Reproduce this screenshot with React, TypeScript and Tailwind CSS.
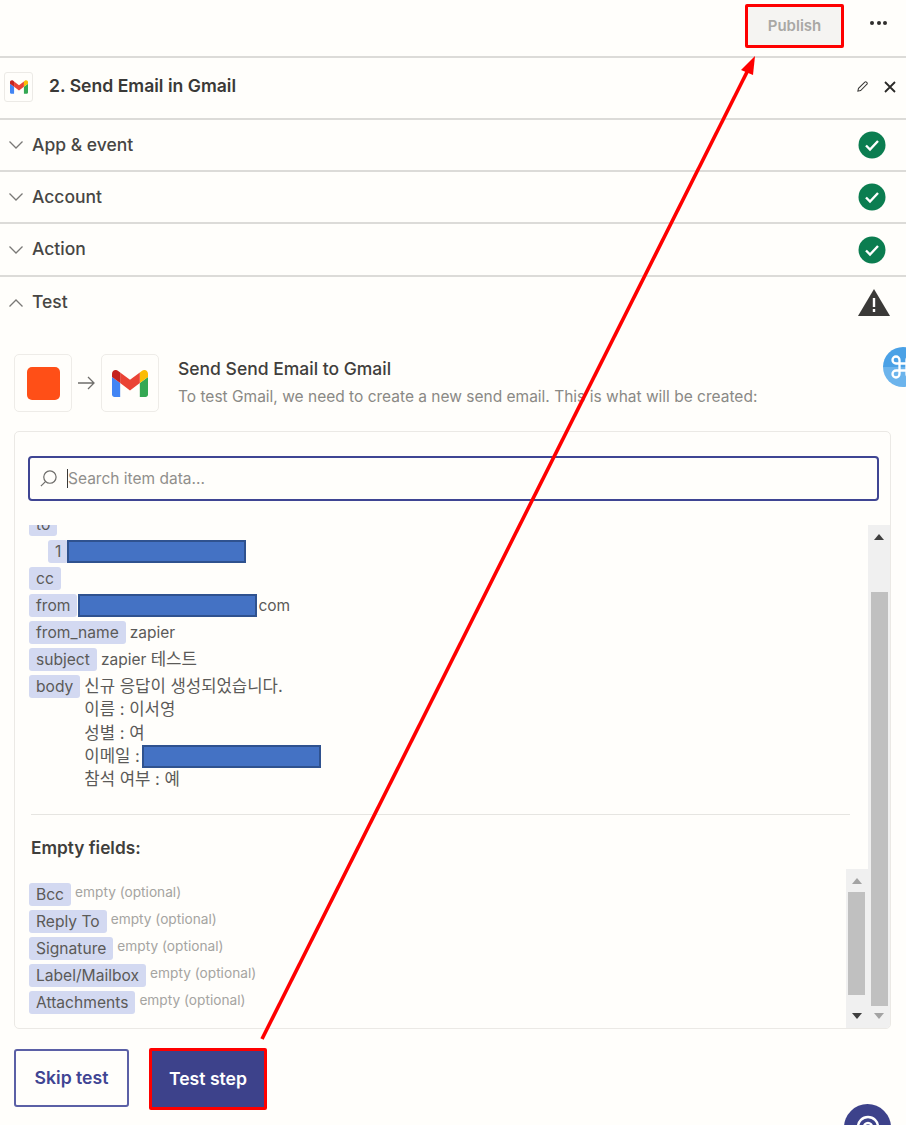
import React from "react";

function GmailM({ className }: { className: string }) {
  return (
    <svg viewBox="52 42 88 66" className={className}>
      <path fill="#4285f4" d="M58 108h14V74L52 59v43c0 3.32 2.69 6 6 6" />
      <path fill="#34a853" d="M120 108h14c3.32 0 6-2.69 6-6V59l-20 15" />
      <path fill="#fbbc04" d="M120 48v26l20-15v-8c0-7.42-8.47-11.65-14.4-7.2" />
      <path fill="#ea4335" d="M72 74V48l24 18 24-18v26L96 92" />
      <path fill="#c5221f" d="M52 51v8l20 15V48l-5.6-4.2c-5.94-4.45-14.4-.22-14.4 7.2" />
    </svg>
  );
}

function Check() {
  return (
    <svg viewBox="0 0 28 28" className="w-[28px] h-[28px]">
      <circle cx="14" cy="14" r="13.5" fill="#0b7d50" />
      <path d="M8 14.5l4 4 8-8.5" fill="none" stroke="#fff" strokeWidth="2.4" />
    </svg>
  );
}

function Chevron({ up }: { up?: boolean }) {
  return (
    <svg viewBox="0 0 16 10" className="w-[16px] h-[10px]">
      <path d={up ? "M1.5 8.5L8 2l6.5 6.5" : "M1.5 1.5L8 8l6.5-6.5"} fill="none" stroke="#7a7976" strokeWidth="1.3" />
    </svg>
  );
}

function Section({ title, h, icon }: { title: string; h: string; icon: React.ReactNode }) {
  return (
    <div className={`flex items-center pl-[8px] pr-[20px] border-b-2 border-[#dcdbd8] ${h}`}>
      <Chevron />
      <span className="ml-[8px] text-[17.5px] font-medium text-[#474644] flex-1">{title}</span>
      {icon}
    </div>
  );
}

function Tag({ children }: { children: React.ReactNode }) {
  return (
    <span className="inline-block h-[23px] leading-[23px] px-[7px] rounded-[3px] bg-[#d3d9f1] text-[15.6px] text-[#5b5a58] shrink-0">
      {children}
    </span>
  );
}

function Redact({ className }: { className: string }) {
  return <span className={`block h-[23px] bg-[#4472c4] border-2 border-[#2f528f] shrink-0 ${className}`} />;
}

function Tri({ dir, color }: { dir: "up" | "down"; color: string }) {
  return (
    <svg viewBox="0 0 10 6" className="w-[10px] h-[6px]">
      <path d={dir === "up" ? "M0 6L5 0l5 6z" : "M0 0l5 6 5-6z"} fill={color} />
    </svg>
  );
}

const empties = ["Bcc", "Reply To", "Signature", "Label/Mailbox", "Attachments"];

export default function App() {
  return (
    <div className="relative w-[906px] h-[1125px] overflow-hidden bg-[#fffefb] font-['Inter','Noto_Sans_CJK_KR',sans-serif]">
      {/* top bar */}
      <div className="h-[58px] border-b-2 border-[#dcdbd8] flex items-start justify-end pt-[4px] pr-[19px]">
        <div className="w-[99px] h-[44px] border-[3.5px] border-[#fe0000] rounded-[2px] bg-[#f5f4f2] flex items-center justify-center text-[15px] font-semibold text-[#a9a8a5]">
          Publish
        </div>
        <div className="ml-[26px] mt-[17px] flex gap-[2.5px]">
          <span className="w-[4px] h-[4px] rounded-full bg-[#2f2e2c]" />
          <span className="w-[4px] h-[4px] rounded-full bg-[#2f2e2c]" />
          <span className="w-[4px] h-[4px] rounded-full bg-[#2f2e2c]" />
        </div>
      </div>

      {/* header */}
      <div className="h-[62px] border-b-2 border-[#dcdbd8] flex items-center pl-[4px] pr-[10px] pb-[3px]">
        <div className="w-[29px] h-[30px] border border-[#eceae6] rounded-[3px] flex items-center justify-center">
          <GmailM className="w-[18px] h-[14px]" />
        </div>
        <span className="ml-[16px] flex-1 text-[17.6px] font-semibold text-[#3a3937]">2. Send Email in Gmail</span>
        <svg viewBox="0 0 14 14" className="w-[13px] h-[13px] mr-[15px]">
          <path d="M2 12l.7-3L9.5 2.2a1.2 1.2 0 011.7 0l.6.6a1.2 1.2 0 010 1.7L5 11.3z" fill="none" stroke="#3a3937" strokeWidth="1.1" />
        </svg>
        <svg viewBox="0 0 12 12" className="w-[12px] h-[12px]">
          <path d="M1 1l10 10M11 1L1 11" stroke="#2a2927" strokeWidth="1.8" />
        </svg>
      </div>

      <Section title="App & event" h="h-[52px]" icon={<Check />} />
      <Section title="Account" h="h-[52px]" icon={<Check />} />
      <Section title="Action" h="h-[53px]" icon={<Check />} />

      {/* Test */}
      <div className="flex items-center pl-[8px] pr-[16px] h-[51px]">
        <Chevron up />
        <span className="ml-[8px] text-[17.5px] font-medium text-[#474644] flex-1">Test</span>
        <svg viewBox="0 0 32 27" className="w-[32px] h-[27px]">
          <path d="M16 0L32 27H0z" fill="#3a3937" />
          <rect x="14.8" y="9" width="2.4" height="9" fill="#fff" />
          <rect x="14.8" y="20" width="2.4" height="3" fill="#fff" />
        </svg>
      </div>

      {/* step intro */}
      <div className="flex items-center pl-[14px] pt-[26px]">
        <div className="w-[58px] h-[58px] border border-[#eeece8] rounded-[5px] flex items-center justify-center">
          <div className="w-[33px] h-[33px] rounded-[5px] bg-[#ff4f17]" />
        </div>
        <svg viewBox="0 0 17 14" className="w-[17px] h-[14px] mx-[6px]">
          <path d="M0 7h15.5M10 1l6 6-6 6" fill="none" stroke="#6f6e6b" strokeWidth="1.3" />
        </svg>
        <div className="w-[58px] h-[58px] border border-[#eeece8] rounded-[5px] flex items-center justify-center">
          <GmailM className="w-[36px] h-[27px]" />
        </div>
        <div className="ml-[19px]">
          <div className="text-[17.5px] leading-[24px] font-medium text-[#3f3e3c] -mt-[2px]">Send Send Email to Gmail</div>
          <div className="text-[15.5px] leading-[20px] mt-[6px] text-[#8a8985] whitespace-nowrap">
            To test Gmail, we need to create a new send email. This is what will be created:
          </div>
        </div>
      </div>

      {/* card */}
      <div className="ml-[14px] mt-[19px] w-[877px] h-[598px] border border-[#ebe9e5] rounded-[5px] flex flex-col overflow-hidden">
        <div className="pt-[24px] px-[13px] pb-[24px]">
          <div className="h-[45px] w-[851px] border-2 border-[#3f4593] rounded-[4px] flex items-center pl-[9px]">
            <svg viewBox="0 0 20 20" className="w-[19px] h-[19px]">
              <circle cx="11.5" cy="8.5" r="6.5" fill="none" stroke="#6f6e6b" strokeWidth="1.3" />
              <path d="M6.5 13.5L2 18" stroke="#6f6e6b" strokeWidth="1.3" />
            </svg>
            <span className="w-[1px] h-[19px] bg-[#3a3937] ml-[9px]" />
            <span className="text-[15.5px] text-[#908f8c]">Search item data...</span>
          </div>
        </div>

        <div className="flex flex-1 min-h-0">
          <div className="flex-1 min-w-0 flex flex-col">
            <div className="pl-[14px] overflow-hidden flex-1 min-h-0 pr-[16px]">
              <div className="-mt-[12px] flex flex-col gap-[4px] text-[15.5px] leading-[23px] text-[#5b5a58]">
                <div className="flex"><Tag>to</Tag></div>
                <div className="flex pl-[19px]"><Tag>1</Tag><Redact className="w-[179px] -ml-[1px]" /></div>
                <div className="flex"><Tag>cc</Tag></div>
                <div className="flex h-[23px] items-center"><Tag>from</Tag><Redact className="w-[179px] ml-[1px]" /><span className="ml-[1px]">com</span></div>
                <div className="flex h-[23px] items-center gap-[4px]"><Tag>from_name</Tag><span>zapier</span></div>
                <div className="flex h-[23px] items-center gap-[4px]"><Tag>subject</Tag><span>zapier <span className="text-[16.8px]">테스트</span></span></div>
                <div className="flex gap-[4px]">
                  <Tag>body</Tag>
                  <div className="text-[16.7px] leading-[23.25px]">
                    <div className="h-[23.25px]">신규 응답이 생성되었습니다.</div>
                    <div className="h-[23.25px]">이름 : 이서영</div>
                    <div className="h-[23.25px]">성별 : 여</div>
                    <div className="h-[23.25px] flex items-center">이메일 :<Redact className="w-[179px] ml-[2px]" /></div>
                    <div className="h-[23.25px]">참석 여부 : 예</div>
                  </div>
                </div>
                <div className="mt-[19px] ml-[2px] mr-[2px] h-[1px] bg-[#e6e5e1]" />
                <div className="mt-[17px] ml-[2px] text-[17.3px] leading-[24px] font-semibold text-[#3f3e3c]">Empty fields:</div>
              </div>
            </div>
            <div className="flex h-[159px]">
              <div className="flex-1 pl-[14px] pt-[14px] flex flex-col gap-[4px]">
                {empties.map((t) => (
                  <div key={t} className="flex items-start">
                    <Tag>{t}</Tag>
                    <span className="ml-[4px] mt-[1px] text-[13.7px] leading-[17px] text-[#a5a4a1]">empty (optional)</span>
                  </div>
                ))}
              </div>
              <div className="w-[22px] bg-[#f0f0f0] flex flex-col items-center justify-between py-[9px] relative">
                <Tri dir="up" color="#a3a3a3" />
                <div className="w-[17px] h-[103px] bg-[#c0c0c0] absolute top-[23px] left-[2px]" />
                <Tri dir="down" color="#3f3f3f" />
              </div>
            </div>
          </div>

          <div className="w-[22px] bg-[#f0f0f0] relative flex flex-col items-center justify-between py-[9px]">
            <Tri dir="up" color="#3f3f3f" />
            <div className="w-[17px] h-[414px] bg-[#c0c0c0] absolute top-[67px] left-[3px]" />
            <Tri dir="down" color="#a3a3a3" />
          </div>
        </div>
      </div>

      {/* buttons */}
      <div className="flex items-start pl-[14px] pt-[20px] gap-[20px]">
        <div className="w-[115px] h-[58px] border-2 border-[#5b60a6] rounded-[3px] flex items-center justify-center text-[17.6px] font-semibold text-[#3f4593]">
          Skip test
        </div>
        <div className="-mt-[1px] w-[118px] h-[62px] border-[3px] border-[#fe0000] rounded-[2px] bg-[#3d428b] flex items-center justify-center text-[17.6px] font-semibold text-white">
          Test step
        </div>
      </div>

      {/* floating: shortcut badge */}
      <div className="absolute left-[883px] top-[347px] w-[40px] h-[40px] rounded-full bg-[linear-gradient(#4aa1e6_50%,#6cb4ec_50%)] flex items-center justify-center">
        <svg viewBox="0 0 24 24" className="w-[28px] h-[28px]" fill="none" stroke="#fff" strokeWidth="2">
          <path d="M15 6v12a3 3 0 103-3H6a3 3 0 103 3V6a3 3 0 10-3 3h12a3 3 0 10-3-3" />
        </svg>
      </div>

      {/* floating: help */}
      <div className="absolute left-[844px] top-[1104px] w-[47px] h-[47px] rounded-full bg-[#3d428b] flex justify-center pt-[11px]">
        <svg viewBox="0 0 24 24" className="w-[24px] h-[24px]" fill="none" stroke="#fff" strokeWidth="2.4">
          <circle cx="12" cy="12" r="10" />
          <circle cx="12" cy="12" r="4" />
        </svg>
      </div>

      {/* annotation arrow */}
      <svg className="absolute inset-0 w-[906px] h-[1125px] pointer-events-none" viewBox="0 0 906 1125">
        <path d="M262 1039L748 70" stroke="#fe0000" strokeWidth="3.6" fill="none" />
        <path d="M755 56L741 70L753 75z" fill="#fe0000" />
      </svg>
    </div>
  );
}
